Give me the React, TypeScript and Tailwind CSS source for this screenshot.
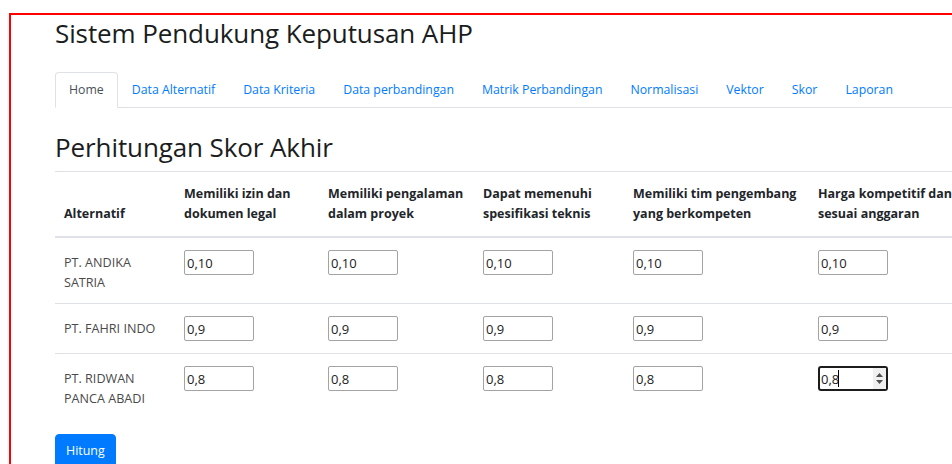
const tabs = [
  "Home",
  "Data Alternatif",
  "Data Kriteria",
  "Data perbandingan",
  "Matrik Perbandingan",
  "Normalisasi",
  "Vektor",
  "Skor",
  "Laporan",
];

const kriteria = [
  { w: "w-[144px]", l1: "Memiliki izin dan", l2: "dokumen legal" },
  { w: "w-[155px]", l1: "Memiliki pengalaman", l2: "dalam proyek" },
  { w: "w-[150px]", l1: "Dapat memenuhi", l2: "spesifikasi teknis" },
  { w: "w-[185px]", l1: "Memiliki tim pengembang", l2: "yang berkompeten" },
  { w: "w-[200px]", l1: "Harga kompetitif dan", l2: "sesuai anggaran" },
];

const alternatif = [
  { nama: "PT. ANDIKA SATRIA", nilai: "0,10" },
  { nama: "PT. FAHRI INDO", nilai: "0,9" },
  { nama: "PT. RIDWAN PANCA ABADI", nilai: "0,8" },
];

function SkorInput({ value }: { value: string }) {
  return (
    <input
      type="text"
      defaultValue={value}
      className="block w-[70px] h-[25px] border border-[#a3a3a3] rounded-[2px] px-[2px] text-[13px] text-[#222] bg-white"
    />
  );
}

// input yang sedang aktif (fokus) dengan spinner angka
function ActiveInput({ value }: { value: string }) {
  return (
    <div className="relative w-[70px] h-[25px]">
      <input
        type="text"
        defaultValue={value}
        className="block w-[70px] h-[25px] border-2 border-[#1c1c1c] rounded-[3px] px-[1px] text-[13px] text-[#222] bg-white outline-none"
      />
      <span className="absolute left-[20px] top-[4px] w-px h-[17px] bg-black" />
      <span className="absolute right-[2px] top-[2px] w-[13px] h-[21px] bg-[#f0f0f0] flex flex-col items-center justify-center gap-[3px]">
        <svg width="7" height="4" viewBox="0 0 7 4">
          <path d="M3.5 0L7 4H0z" fill="#505050" />
        </svg>
        <svg width="7" height="4" viewBox="0 0 7 4">
          <path d="M0 0h7L3.5 4z" fill="#505050" />
        </svg>
      </span>
    </div>
  );
}

export default function App() {
  return (
    <div className="h-screen overflow-hidden bg-white pl-[9px] pt-[13px] font-['Open_Sans','Noto_Sans',sans-serif]">
      <div className="w-[1100px] h-[600px] border-l-2 border-t-2 border-[#ff0000] pl-[44px]">
        <h1 className="text-[26px] leading-[36px] font-medium text-[#1a1d20] tracking-[-0.1px]">
          Sistem Pendukung Keputusan AHP
        </h1>

        <ul className="flex mt-[21px] border-b border-[#dee2e6] text-[12.3px] leading-[20px]">
          {tabs.map((t, i) => (
            <li key={t} className="-mb-px">
              <a
                href="#"
                className={
                  i === 0
                    ? "block px-[13px] py-[7px] border border-[#dee2e6] border-b-white rounded-t-[4px] bg-white text-[#495057]"
                    : "block px-[13px] py-[7px] border border-transparent text-[#007bff]"
                }
              >
                {t}
              </a>
            </li>
          ))}
        </ul>

        <h2 className="mt-[24px] mb-[8px] text-[26px] leading-[31px] font-medium text-[#1a1d20] tracking-[-0.1px]">
          Perhitungan Skor Akhir
        </h2>

        <table className="table-fixed w-[954px] text-[12.6px] leading-[20px] border-collapse mb-[15px]">
          <thead>
            <tr className="border-t border-[#dee2e6] border-b-2">
              <th className="w-[120px] px-[9px] py-[12px] text-left align-bottom font-bold text-[12.5px] text-[#212529]">
                Alternatif
              </th>
              {kriteria.map((k) => (
                <th
                  key={k.l1}
                  className={`${k.w} px-[9px] py-[12px] text-left align-bottom font-bold text-[12.5px] text-[#212529] whitespace-nowrap`}
                >
                  {k.l1}
                  <br />
                  {k.l2}
                </th>
              ))}
            </tr>
          </thead>
          <tbody>
            {alternatif.map((a, r) => (
              <tr key={a.nama} className={r > 0 ? "border-t border-[#dee2e6]" : ""}>
                <td className="px-[9px] pt-[15px] pb-[10px] align-top text-[#4a4a4a]">{a.nama}</td>
                {kriteria.map((k, c) => (
                  <td key={k.l1} className="px-[9px] pt-[12px] pb-[12px] align-top">
                    {r === 2 && c === 4 ? (
                      <ActiveInput value={a.nilai} />
                    ) : (
                      <SkorInput value={a.nilai} />
                    )}
                  </td>
                ))}
              </tr>
            ))}
          </tbody>
        </table>

        <button className="px-[10px] py-[6px] rounded-[4px] bg-[#007bff] text-white text-[12.4px] leading-[20px] border border-[#007bff]">
          Hitung
        </button>
      </div>
    </div>
  );
}
